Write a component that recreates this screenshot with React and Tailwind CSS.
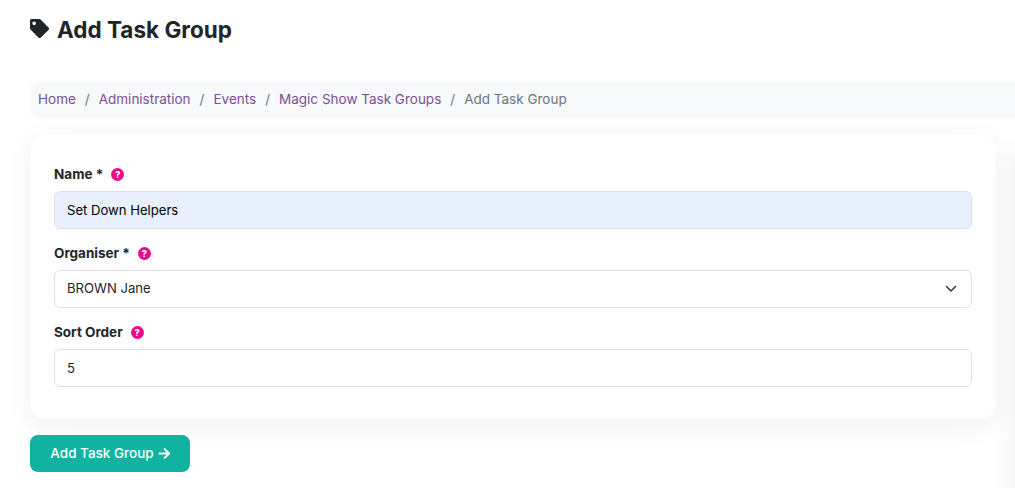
import React from 'react';
import { FaTag, FaArrowRight } from 'react-icons/fa';

const Crumb = ({ children }) => (
  <>
    <a href="#" className="text-[#7b4f96]">{children}</a>
    <span className="px-[9px] text-[#6c757d]">/</span>
  </>
);

const Label = ({ children }) => (
  <label className="flex items-center gap-[8px] h-[19px] mb-[7px] text-[13.5px] font-bold text-[#212529]">
    <span>{children}</span>
    <span className="flex items-center justify-center w-[13px] h-[13px] rounded-full bg-[#ec0a8c] text-[9px] font-extrabold leading-none text-white">?</span>
  </label>
);

const inputClass = 'block w-full h-[38px] px-[12px] rounded-[6px] border border-[#dee2e6] text-[13.1px] text-[#212529] outline-none';

const App = () => {
  return (
    <div className="relative h-[488px] w-[1015px] overflow-hidden bg-white font-['Inter','Liberation_Sans',sans-serif]">
      <div className="pl-[30px]">
        <h1 className="flex items-center gap-[8px] h-[82px] pb-[22px] text-[22.5px] font-bold text-[#212529]">
          <FaTag className="text-[19px] -mt-[3px]" />
          Add Task Group
        </h1>

        <nav className="flex items-center h-[36px] pl-[8px] pb-[1px] rounded-l-[8px] bg-[#f8f9fa] text-[13.5px]">
          <Crumb>Home</Crumb>
          <Crumb>Administration</Crumb>
          <Crumb>Events</Crumb>
          <Crumb>Magic Show Task Groups</Crumb>
          <span className="text-[#6c757d]">Add Task Group</span>
        </nav>

        <div className="w-[966px] h-[285px] mt-[16px] px-[24px] pt-[31px] rounded-[16px] bg-white shadow-[0_6px_30px_rgba(0,0,0,0.06)]">
          <Label>Name *</Label>
          <input className={`${inputClass} bg-[#e8f0fe] text-black`} defaultValue="Set Down Helpers" />

          <div className="mt-[15px]">
            <Label>Organiser *</Label>
            <div className="relative">
              <select className={`${inputClass} appearance-none bg-white`} defaultValue="jane">
                <option value="jane">BROWN Jane</option>
              </select>
              <svg className="absolute right-[15px] top-[14px] pointer-events-none" width="12" height="10" viewBox="0 0 12 10" fill="none">
                <path d="M1.5 2.5 L6 7 L10.5 2.5" stroke="#343a40" strokeWidth="1.5" strokeLinecap="round" strokeLinejoin="round" />
              </svg>
            </div>
          </div>

          <div className="mt-[15px]">
            <Label>Sort Order</Label>
            <input className={`${inputClass} bg-white`} defaultValue="5" />
          </div>
        </div>

        <button className="flex items-center justify-center gap-[4px] w-[160px] h-[37px] mt-[16px] pl-[1px] rounded-[8px] bg-[#0fb3a0] text-[13.5px] font-medium text-white">
          Add Task Group
          <FaArrowRight className="text-[13px]" />
        </button>
      </div>

      {/* soft shadow from the panel just past the right edge */}
      <div className="absolute left-[1015px] top-[150px] w-[40px] h-[500px] bg-white shadow-[0_0_28px_rgba(0,0,0,0.07)]" />
    </div>
  );
};

export default App;
